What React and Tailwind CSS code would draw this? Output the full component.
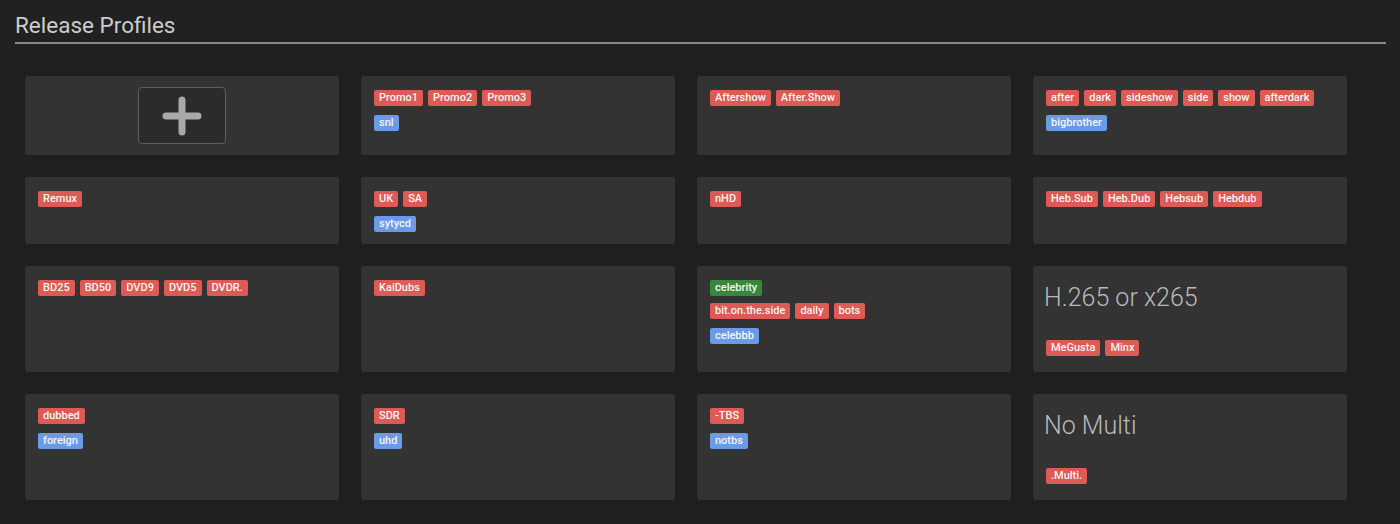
import React from 'react'

const PROFILES = [
  { add: true },
  { required: ['Promo1', 'Promo2', 'Promo3'], ignored: ['snl'] },
  { required: ['Aftershow', 'After.Show'] },
  { required: ['after', 'dark', 'sideshow', 'side', 'show', 'afterdark'], ignored: ['bigbrother'] },
  { required: ['Remux'] },
  { required: ['UK', 'SA'], ignored: ['sytycd'] },
  { required: ['nHD'] },
  { required: ['Heb.Sub', 'Heb.Dub', 'Hebsub', 'Hebdub'] },
  { required: ['BD25', 'BD50', 'DVD9', 'DVD5', 'DVDR.'] },
  { required: ['KaiDubs'] },
  { preferred: ['celebrity'], required: ['bit.on.the.side', 'daily', 'bots'], ignored: ['celebbb'] },
  { name: 'H.265 or x265', required: ['MeGusta', 'Minx'] },
  { required: ['dubbed'], ignored: ['foreign'] },
  { required: ['SDR'], ignored: ['uhd'] },
  { required: ['-TBS'], ignored: ['notbs'] },
  { name: 'No Multi', required: ['.Multi.'] },
]

const KIND = {
  green: 'bg-[#37883c]',
  red: 'bg-[#dd5a55]',
  blue: 'bg-[#6a9be6]',
}

const TagGroup = ({ tags, kind, className = '' }) => (
  <div className={`flex flex-wrap gap-x-[5px] gap-y-[6px] ${className}`}>
    {tags.map((t) => (
      <span
        key={t}
        className={`${KIND[kind]} rounded-[2px] px-[5px] text-[11px] leading-[16px] font-medium text-[#f4f4f4]`}
      >
        {t}
      </span>
    ))}
  </div>
)

const AddCard = () => (
  <div className="flex items-center justify-center rounded-[3px] bg-[#333333] py-[11px] shadow-[0_0_10px_1px_rgba(0,0,0,0.15)]">
    <button className="flex h-[57px] w-[88px] items-center justify-center rounded-[4px] border border-[#5e5e5e] bg-[#2b2b2b]">
      <svg width="40" height="40" viewBox="0 0 40 40">
        <path d="M20 4v32M4 20h32" stroke="#a9a9a9" strokeWidth="7" strokeLinecap="round" />
      </svg>
    </button>
  </div>
)

const ProfileCard = ({ profile }) => {
  const { name, preferred, required, ignored } = profile
  return (
    <div
      className={`flex flex-col rounded-[3px] bg-[#333333] px-[13px] pt-[14px] shadow-[0_0_10px_1px_rgba(0,0,0,0.15)] ${
        name ? 'pb-[16px]' : 'pb-[12px]'
      }`}
    >
      {name && (
        <div className="mb-[24px] -ml-[2px] truncate text-[25px] leading-[36px] font-light text-[#bababa]">{name}</div>
      )}
      {preferred && <TagGroup tags={preferred} kind="green" />}
      {required && <TagGroup tags={required} kind="red" className={preferred ? 'mt-[7px]' : ''} />}
      {ignored && <TagGroup tags={ignored} kind="blue" className="mt-[9px]" />}
    </div>
  )
}

export default function App() {
  return (
    <div className="min-h-screen bg-[#212121] px-[15px] pb-[20px] font-['Roboto',_'Liberation_Sans',_sans-serif]">
      <div className="w-[1371px] border-b-2 border-[#8a8a8a] pt-[12px] pb-[4px]">
        <h2 className="text-[22.5px] leading-[26px] font-normal text-[#cccccc]">Release Profiles</h2>
      </div>

      <div className="mt-[32px] ml-[10px] grid grid-cols-[repeat(4,314px)] gap-[22px]">
        {PROFILES.map((p, i) => (p.add ? <AddCard key={i} /> : <ProfileCard key={i} profile={p} />))}
      </div>
    </div>
  )
}
